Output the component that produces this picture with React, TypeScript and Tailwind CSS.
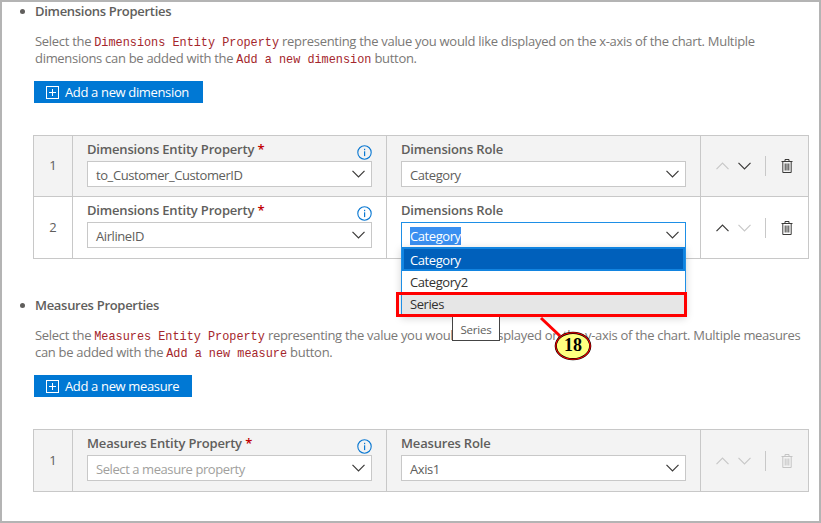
import React from "react";

const font = { fontFamily: '"Open Sans", "Noto Sans", sans-serif' };

function Chevron({ up, disabled }: { up?: boolean; disabled?: boolean }) {
  return (
    <svg width="13" height="8" viewBox="0 0 13 8" fill="none" className="block">
      <path
        d={up ? "M0.5 7.2 L6.5 1 L12.5 7.2" : "M0.5 0.8 L6.5 7 L12.5 0.8"}
        stroke={disabled ? "#c8c8c8" : "#3b3a39"}
        strokeWidth="1.2"
      />
    </svg>
  );
}

function Trash({ disabled }: { disabled?: boolean }) {
  const c = disabled ? "#c4c4c4" : "#3b3a39";
  return (
    <svg width="12" height="14" viewBox="0 0 12 14" fill="none" className="block">
      <path d="M0.5 2.5 H11.5 M4 2.5 V0.5 H8 V2.5 M1.8 2.5 V13.5 H10.2 V2.5 M4.2 4.5 V11.5 M6 4.5 V11.5 M7.8 4.5 V11.5" stroke={c} strokeWidth="1" />
    </svg>
  );
}

function Info() {
  return (
    <svg width="15" height="15" viewBox="0 0 15 15" fill="none" className="block">
      <circle cx="7.5" cy="7.5" r="6.7" stroke="#0a78d2" strokeWidth="1.1" />
      <rect x="7" y="3.8" width="1.2" height="1.4" fill="#0a78d2" />
      <rect x="7" y="6.3" width="1.2" height="4.8" fill="#0a78d2" />
    </svg>
  );
}

function Plus() {
  return (
    <svg width="13" height="13" viewBox="0 0 13 13" fill="none" className="block">
      <rect x="0.5" y="0.5" width="12" height="12" stroke="#fff" />
      <path d="M6.5 3 V10 M3 6.5 H10" stroke="#fff" />
    </svg>
  );
}

function Select({
  value,
  placeholder,
  focused,
  children,
}: {
  value: string;
  placeholder?: boolean;
  focused?: boolean;
  children?: React.ReactNode;
}) {
  return (
    <div className="relative">
      <div
        className={`flex h-[26px] w-[285px] items-center justify-between border bg-white pl-2 pr-[6px] text-[13px] tracking-[-0.42px] ${
          focused ? "border-[#1e8fe6]" : "border-[#c8c8c8]"
        } ${placeholder ? "text-[#a19f9d]" : "text-[#605e5c]"}`}
      >
        {focused ? (
          <span className="mt-[1px] bg-[#3a8ff0] leading-[18px] text-white">{value}</span>
        ) : (
          <span className="pt-[3px]">{value}</span>
        )}
        <Chevron />
      </div>
      {children}
    </div>
  );
}

function Field({
  label,
  required,
  info,
  children,
}: {
  label: string;
  required?: boolean;
  info?: boolean;
  children: React.ReactNode;
}) {
  return (
    <div className="h-full border-l border-[#c8c8c8] pl-[14px]">
      <div className="flex h-[25px] w-[285px] items-start justify-between pt-[4px]">
        <span className="text-[13px] font-semibold leading-[18px] tracking-[-0.17px] text-[#605e5c]">
          {label}
          {required && <span className="text-[#c00000]"> *</span>}
        </span>
        {info && (
          <span className="mt-[5px]">
            <Info />
          </span>
        )}
      </div>
      {children}
    </div>
  );
}

function Actions({ upDisabled, downDisabled, trashDisabled }: { upDisabled?: boolean; downDisabled?: boolean; trashDisabled?: boolean }) {
  return (
    <div className="flex h-full items-center border-l border-[#c8c8c8] pl-[15px]">
      <Chevron up disabled={upDisabled} />
      <span className="ml-[9px]">
        <Chevron disabled={downDisabled} />
      </span>
      <span className="ml-[14px] h-5 w-px bg-[#c8c8c8]" />
      <span className="ml-[15px]">
        <Trash disabled={trashDisabled} />
      </span>
    </div>
  );
}

function Row({
  index,
  gray,
  height,
  first,
  children,
}: {
  index: number;
  gray?: boolean;
  height: string;
  first?: boolean;
  children: React.ReactNode;
}) {
  return (
    <div className={`grid grid-cols-[38px_314px_314px_108px] ${height} ${first ? "" : "border-t border-[#c8c8c8]"} ${gray ? "bg-[#f3f3f3]" : "bg-white"}`}>
      <div className="flex items-center justify-center text-[13px] text-[#605e5c]">{index}</div>
      {children}
    </div>
  );
}

function Code({ children }: { children: React.ReactNode }) {
  return (
    <code className="text-[11.85px] leading-none tracking-normal text-[#a4262c]" style={{ fontFamily: '"Liberation Mono", monospace' }}>
      {children}
    </code>
  );
}

function Heading({ children }: { children: React.ReactNode }) {
  return (
    <div className="flex h-[18px] items-center pl-[18px]">
      <span className="h-[5px] w-[5px] rounded-full bg-[#605e5c]" />
      <span className="ml-[10px] pt-[1px] text-[13px] font-semibold tracking-[-0.3px] text-[#605e5c]">{children}</span>
    </div>
  );
}

function Para({ children }: { children: React.ReactNode }) {
  return <p className="ml-[33px] whitespace-nowrap text-[13px] leading-[17px] tracking-[-0.3px] text-[#7a7876]">{children}</p>;
}

function AddButton({ label, width }: { label: string; width: string }) {
  return (
    <div className={`ml-[32px] flex h-[22px] items-center gap-[6px] bg-[#0078d4] pl-[12px] text-[13px] tracking-[-0.35px] text-white ${width}`}>
      <Plus />
      <span className="pt-[2px]">{label}</span>
    </div>
  );
}

function Dropdown() {
  return (
    <div className="absolute left-0 top-[25px] z-10 w-[285px] border-x border-[#1e8fe6] bg-white text-[13px] tracking-[-0.42px] text-[#323130] shadow-[0_2px_8px_rgba(0,0,0,0.18)]">
      <div className="flex h-[24px] items-center border-2 border-[#1284e0] bg-[#0060bb] pl-[6px] pt-[3px] text-white">Category</div>
      <div className="flex h-[22px] items-center pl-2 pt-[2px]">Category2</div>
      <div className="flex h-[23px] items-center bg-[#e6e6e6] pl-2">Series</div>
      <div className="absolute left-[-6px] top-[45px] h-[25px] w-[291px] border-[3px] border-[#ff0000]" />
      <div className="absolute left-[50px] top-[69px] z-[-1] flex h-[25px] w-[48px] items-center justify-center border border-[#444] bg-white pt-[2px] text-[11.5px] tracking-[-0.2px] text-[#605e5c]">
        Series
      </div>
    </div>
  );
}

function Callout() {
  return (
    <div className="absolute left-[536px] top-[314px] z-20 h-[46px] w-[55px]">
      <svg width="55" height="46" viewBox="0 0 55 46" fill="none" className="absolute left-0 top-0">
        <path d="M3 2 L22 20" stroke="#ff0000" strokeWidth="3" />
        <ellipse cx="35" cy="30" rx="17.2" ry="13.2" fill="#ffff80" stroke="#000" strokeWidth="2.2" />
        <ellipse cx="35" cy="30" rx="17.2" ry="13.2" fill="none" stroke="#ff0000" strokeWidth="1.1" />
      </svg>
      <span
        className="absolute left-[17px] top-[18px] w-[36px] text-center text-[18px] font-bold leading-[22px] text-black"
        style={{ fontFamily: '"Liberation Serif", serif' }}
      >
        18
      </span>
    </div>
  );
}

export default function App() {
  return (
    <div className="relative h-[523px] w-[821px] overflow-hidden border-2 border-[#b4b4b4] bg-white" style={font}>
      <Heading>Dimensions Properties</Heading>
      <div className="mt-[13px]">
        <Para>
          Select the <Code>Dimensions Entity Property</Code> representing the value you would like displayed on the x-axis of the chart. Multiple
          <br />
          dimensions can be added with the <Code>Add a new dimension</Code> button.
        </Para>
      </div>
      <div className="mt-[14px]">
        <AddButton label="Add a new dimension" width="w-[169px]" />
      </div>
      <div className="ml-[31px] mt-[32px] w-[776px] border border-[#c8c8c8]">
        <Row index={1} gray height="h-[60px]" first>
          <Field label="Dimensions Entity Property" required info>
            <Select value="to_Customer_CustomerID" />
          </Field>
          <Field label="Dimensions Role">
            <Select value="Category" />
          </Field>
          <Actions upDisabled />
        </Row>
        <Row index={2} height="h-[62px]">
          <Field label="Dimensions Entity Property" required info>
            <Select value="AirlineID" />
          </Field>
          <Field label="Dimensions Role">
            <Select value="Category" focused>
              <Dropdown />
            </Select>
          </Field>
          <Actions downDisabled />
        </Row>
      </div>
      <div className="mt-[37px]">
        <Heading>Measures Properties</Heading>
      </div>
      <div className="mt-[13px]">
        <Para>
          Select the <Code>Measures Entity Property</Code> representing the value you would like displayed on the y-axis of the chart. Multiple measures
          <br />
          can be added with the <Code>Add a new measure</Code> button.
        </Para>
      </div>
      <div className="mt-[14px]">
        <AddButton label="Add a new measure" width="w-[158px]" />
      </div>
      <div className="ml-[31px] mt-[32px] w-[776px] border border-[#c8c8c8]">
        <Row index={1} gray height="h-[61px]" first>
          <Field label="Measures Entity Property" required info>
            <Select value="Select a measure property" placeholder />
          </Field>
          <Field label="Measures Role">
            <Select value="Axis1" />
          </Field>
          <Actions upDisabled downDisabled trashDisabled />
        </Row>
      </div>
      <Callout />
    </div>
  );
}
